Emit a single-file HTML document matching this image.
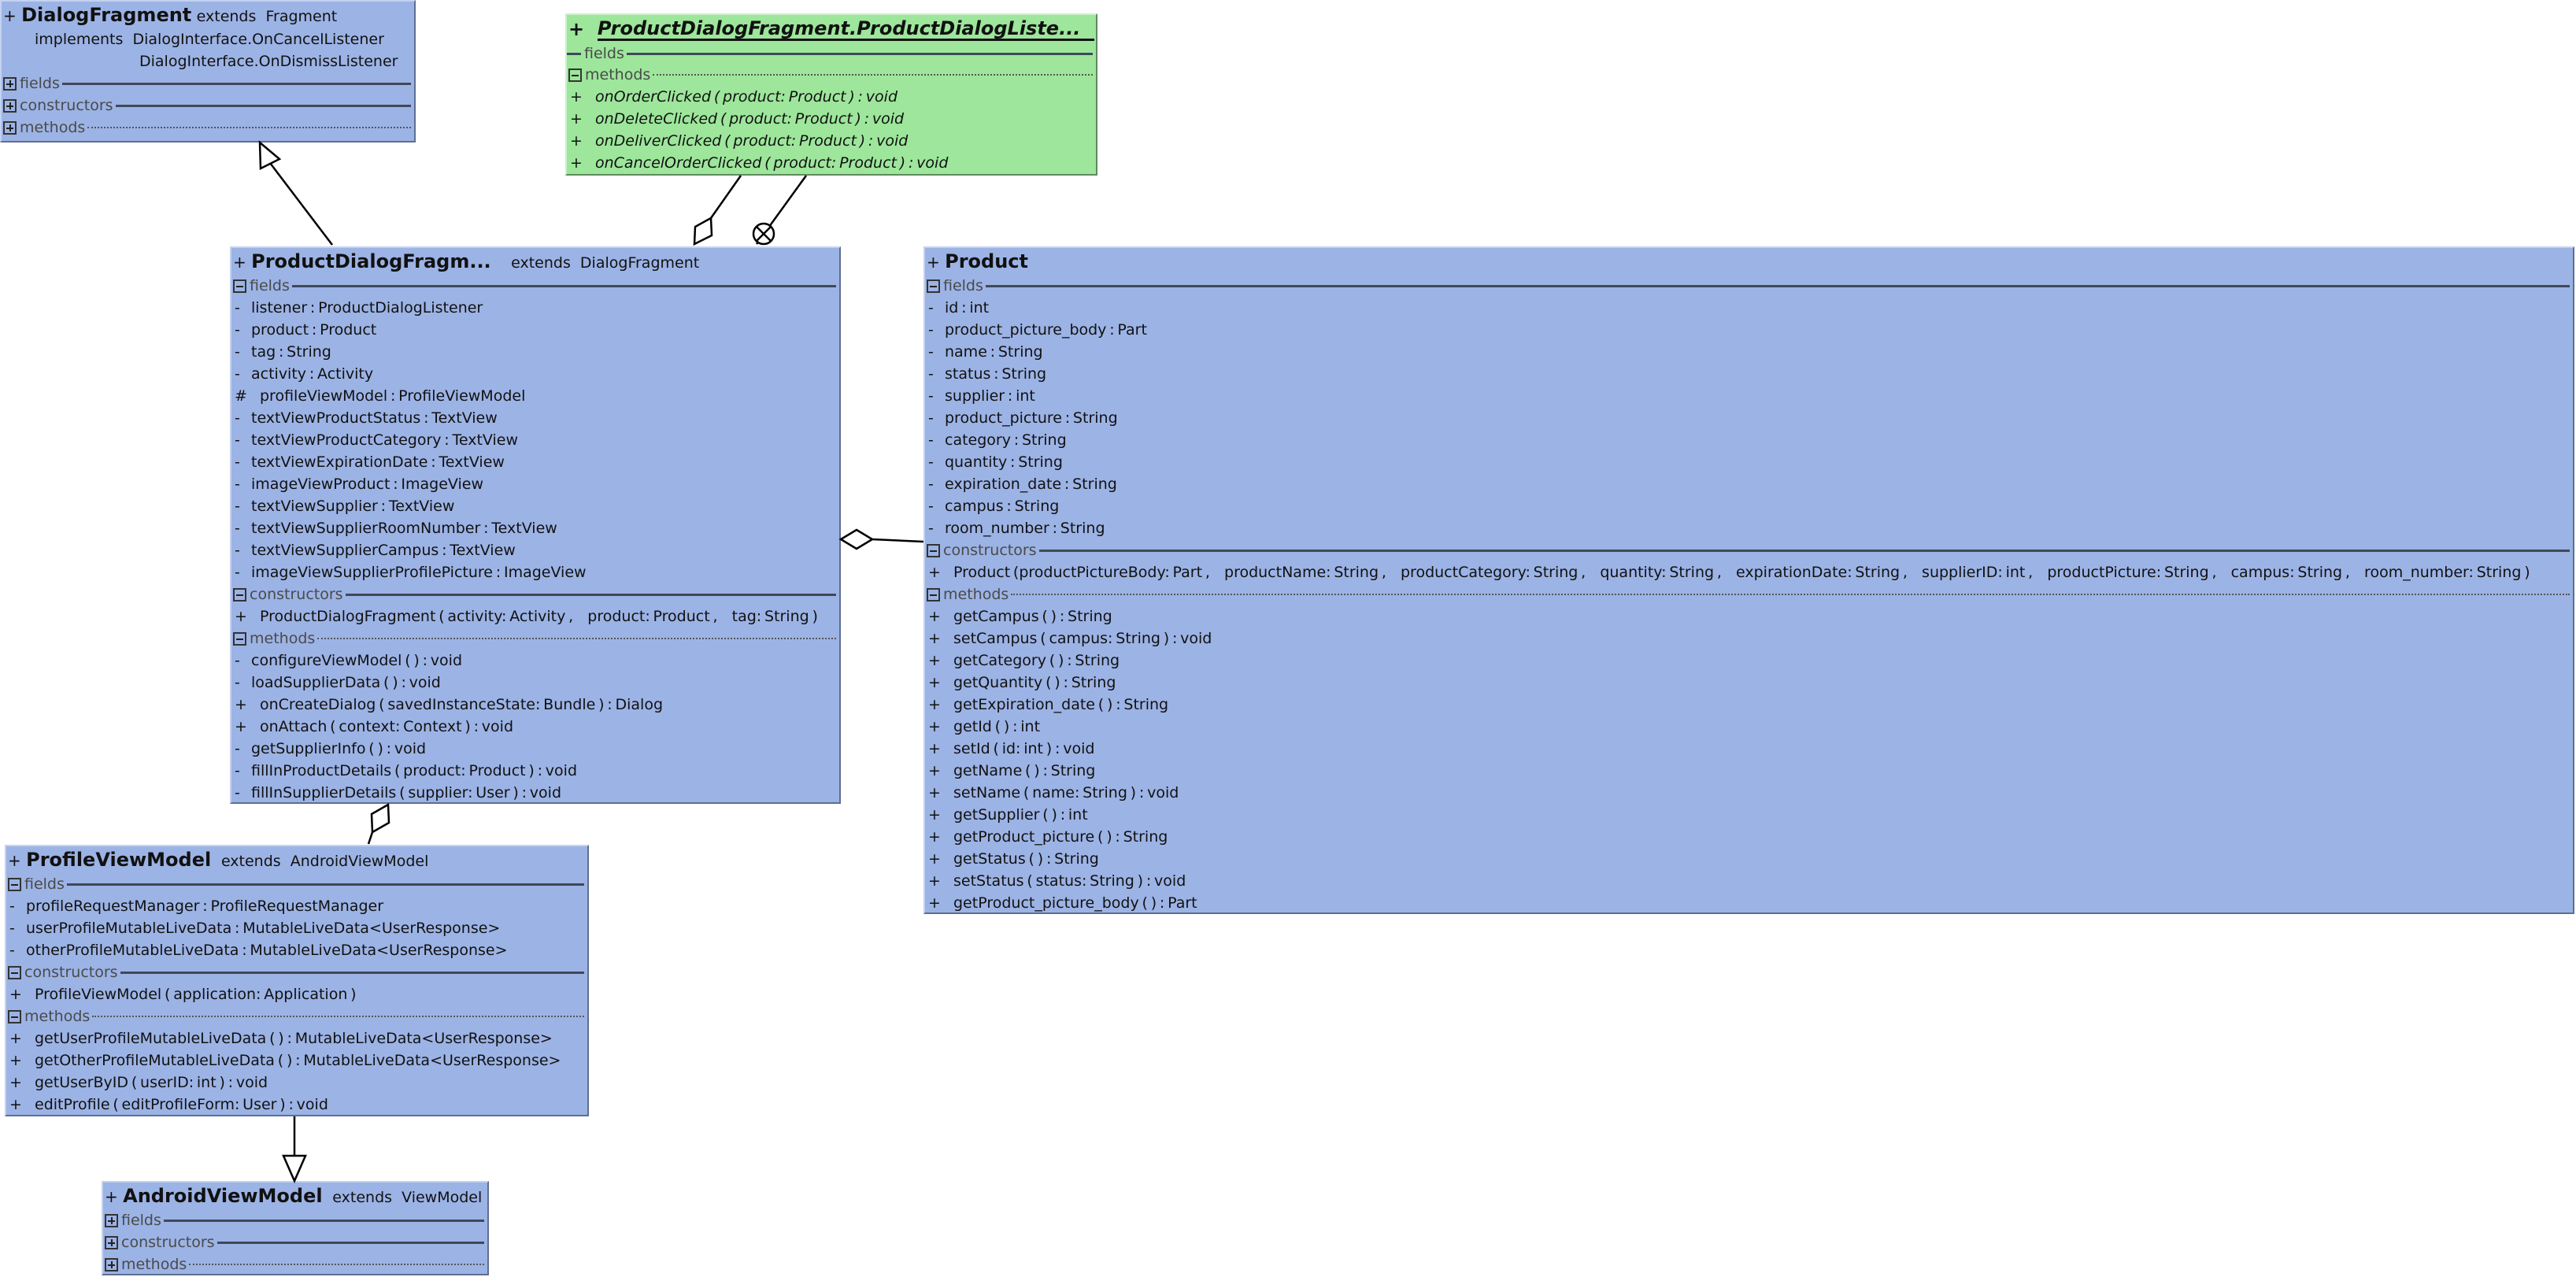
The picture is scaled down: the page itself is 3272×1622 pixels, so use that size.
<!DOCTYPE html>
<html><head><meta charset="utf-8">
<style>
html,body{margin:0;padding:0;background:#fff;}
body{width:3272px;height:1622px;position:relative;overflow:hidden;font-family:"DejaVu Sans","Liberation Sans",sans-serif;font-size:19px;color:#111;}
.box{position:absolute;box-sizing:border-box;background:#9cb3e5;border:2px solid;border-color:#c4d2f0 #5e6e90 #5e6e90 #c4d2f0;overflow:hidden;}
.green{background:#9de69b;border-color:#c8f2c6 #5e8a5e #5e8a5e #c8f2c6;}
.t{height:34px;line-height:34px;white-space:nowrap;padding-left:2px;font-size:20px;}
.t b{font-size:24px;}
.t span.e{font-size:19px;}
.r{height:28px;line-height:28px;white-space:nowrap;position:relative;}
.v{position:absolute;left:4px;}
.n{position:absolute;left:25px;}
.p{position:absolute;left:36px;}
.s{height:28px;display:flex;align-items:center;white-space:nowrap;padding-right:4px;}
.ic{width:13px;height:13px;border:2px solid #333;margin-left:2px;margin-right:4px;position:relative;flex:none;box-sizing:content-box;}
.ic:before{content:"";position:absolute;left:2px;right:2px;top:6px;height:2px;background:#222;}
.ic.plus:after{content:"";position:absolute;top:2px;bottom:2px;left:6px;width:2px;background:#222;}
.lb{color:#4a4a4a;margin-right:3px;}
.ln{flex:1;height:0;border-top:3px solid #404858;}
.dt{flex:1;height:0;border-top:2px dotted #555;}
i{font-style:italic;}
svg{position:absolute;left:0;top:0;}
</style></head><body>

<div class="box" style="left:0;top:0;width:528px;height:181px;">
 <div class="t">+ <b>DialogFragment</b> <span class="e">extends&nbsp; Fragment</span></div>
 <div class="r"><span style="position:absolute;left:42px">implements&nbsp; DialogInterface.OnCancelListener</span></div>
 <div class="r"><span style="position:absolute;left:175px">DialogInterface.OnDismissListener</span></div>
 <div class="s"><span class="ic plus"></span><span class="lb">fields</span><span class="ln"></span></div>
 <div class="s"><span class="ic plus"></span><span class="lb">constructors</span><span class="ln"></span></div>
 <div class="s"><span class="ic plus"></span><span class="lb">methods</span><span class="dt"></span></div>
</div>

<div class="box green" style="left:718px;top:17px;width:676px;height:206px;">
 <div class="t" style="height:36px;line-height:36px;display:flex;"><i><b>+&nbsp;&nbsp;</b></i><span style="flex:1;border-bottom:3px solid #111;height:30px;line-height:34px;margin-right:2px;"><i><b>ProductDialogFragment.ProductDialogListe...</b></i></span></div>
 <div class="s" style="height:26px"><span style="width:18px;border-top:3px solid #404858;margin-right:4px;"></span><span class="lb">fields</span><span class="ln"></span></div>
 <div class="s"><span class="ic"></span><span class="lb">methods</span><span class="dt"></span></div>
 <div class="r"><span class="v">+</span><span class="p"><i>onOrderClicked&#8201;(&#8201;product:&#8201;Product&#8201;)&#8201;:&#8201;void</i></span></div>
 <div class="r"><span class="v">+</span><span class="p"><i>onDeleteClicked&#8201;(&#8201;product:&#8201;Product&#8201;)&#8201;:&#8201;void</i></span></div>
 <div class="r"><span class="v">+</span><span class="p"><i>onDeliverClicked&#8201;(&#8201;product:&#8201;Product&#8201;)&#8201;:&#8201;void</i></span></div>
 <div class="r"><span class="v">+</span><span class="p"><i>onCancelOrderClicked&#8201;(&#8201;product:&#8201;Product&#8201;)&#8201;:&#8201;void</i></span></div>
</div>

<div class="box" style="left:292px;top:313px;width:776px;height:708px;">
 <div class="t">+ <b>ProductDialogFragm...</b>&nbsp;&nbsp;&nbsp; <span class="e">extends&nbsp; DialogFragment</span></div>
 <div class="s"><span class="ic"></span><span class="lb">fields</span><span class="ln"></span></div>
 <div class="r"><span class="v">-</span><span class="n">listener&#8201;:&#8201;ProductDialogListener</span></div>
 <div class="r"><span class="v">-</span><span class="n">product&#8201;:&#8201;Product</span></div>
 <div class="r"><span class="v">-</span><span class="n">tag&#8201;:&#8201;String</span></div>
 <div class="r"><span class="v">-</span><span class="n">activity&#8201;:&#8201;Activity</span></div>
 <div class="r"><span class="v">#</span><span class="p">profileViewModel&#8201;:&#8201;ProfileViewModel</span></div>
 <div class="r"><span class="v">-</span><span class="n">textViewProductStatus&#8201;:&#8201;TextView</span></div>
 <div class="r"><span class="v">-</span><span class="n">textViewProductCategory&#8201;:&#8201;TextView</span></div>
 <div class="r"><span class="v">-</span><span class="n">textViewExpirationDate&#8201;:&#8201;TextView</span></div>
 <div class="r"><span class="v">-</span><span class="n">imageViewProduct&#8201;:&#8201;ImageView</span></div>
 <div class="r"><span class="v">-</span><span class="n">textViewSupplier&#8201;:&#8201;TextView</span></div>
 <div class="r"><span class="v">-</span><span class="n">textViewSupplierRoomNumber&#8201;:&#8201;TextView</span></div>
 <div class="r"><span class="v">-</span><span class="n">textViewSupplierCampus&#8201;:&#8201;TextView</span></div>
 <div class="r"><span class="v">-</span><span class="n">imageViewSupplierProfilePicture&#8201;:&#8201;ImageView</span></div>
 <div class="s"><span class="ic"></span><span class="lb">constructors</span><span class="ln"></span></div>
 <div class="r"><span class="v">+</span><span class="p">ProductDialogFragment&#8201;(&#8201;activity:&#8201;Activity&#8201;,&nbsp;&nbsp; product:&#8201;Product&#8201;,&nbsp;&nbsp; tag:&#8201;String&#8201;)</span></div>
 <div class="s"><span class="ic"></span><span class="lb">methods</span><span class="dt"></span></div>
 <div class="r"><span class="v">-</span><span class="n">configureViewModel&#8201;(&#8201;)&#8201;:&#8201;void</span></div>
 <div class="r"><span class="v">-</span><span class="n">loadSupplierData&#8201;(&#8201;)&#8201;:&#8201;void</span></div>
 <div class="r"><span class="v">+</span><span class="p">onCreateDialog&#8201;(&#8201;savedInstanceState:&#8201;Bundle&#8201;)&#8201;:&#8201;Dialog</span></div>
 <div class="r"><span class="v">+</span><span class="p">onAttach&#8201;(&#8201;context:&#8201;Context&#8201;)&#8201;:&#8201;void</span></div>
 <div class="r"><span class="v">-</span><span class="n">getSupplierInfo&#8201;(&#8201;)&#8201;:&#8201;void</span></div>
 <div class="r"><span class="v">-</span><span class="n">fillInProductDetails&#8201;(&#8201;product:&#8201;Product&#8201;)&#8201;:&#8201;void</span></div>
 <div class="r"><span class="v">-</span><span class="n">fillInSupplierDetails&#8201;(&#8201;supplier:&#8201;User&#8201;)&#8201;:&#8201;void</span></div>
</div>

<div class="box" style="left:1173px;top:313px;width:2097px;height:848px;">
 <div class="t">+ <b>Product</b></div>
 <div class="s"><span class="ic"></span><span class="lb">fields</span><span class="ln"></span></div>
 <div class="r"><span class="v">-</span><span class="n">id&#8201;:&#8201;int</span></div>
 <div class="r"><span class="v">-</span><span class="n">product_picture_body&#8201;:&#8201;Part</span></div>
 <div class="r"><span class="v">-</span><span class="n">name&#8201;:&#8201;String</span></div>
 <div class="r"><span class="v">-</span><span class="n">status&#8201;:&#8201;String</span></div>
 <div class="r"><span class="v">-</span><span class="n">supplier&#8201;:&#8201;int</span></div>
 <div class="r"><span class="v">-</span><span class="n">product_picture&#8201;:&#8201;String</span></div>
 <div class="r"><span class="v">-</span><span class="n">category&#8201;:&#8201;String</span></div>
 <div class="r"><span class="v">-</span><span class="n">quantity&#8201;:&#8201;String</span></div>
 <div class="r"><span class="v">-</span><span class="n">expiration_date&#8201;:&#8201;String</span></div>
 <div class="r"><span class="v">-</span><span class="n">campus&#8201;:&#8201;String</span></div>
 <div class="r"><span class="v">-</span><span class="n">room_number&#8201;:&#8201;String</span></div>
 <div class="s"><span class="ic"></span><span class="lb">constructors</span><span class="ln"></span></div>
 <div class="r"><span class="v">+</span><span class="p">Product&#8201;(productPictureBody:&#8201;Part&#8201;,&nbsp;&nbsp; productName:&#8201;String&#8201;,&nbsp;&nbsp; productCategory:&#8201;String&#8201;,&nbsp;&nbsp; quantity:&#8201;String&#8201;,&nbsp;&nbsp; expirationDate:&#8201;String&#8201;,&nbsp;&nbsp; supplierID:&#8201;int&#8201;,&nbsp;&nbsp; productPicture:&#8201;String&#8201;,&nbsp;&nbsp; campus:&#8201;String&#8201;,&nbsp;&nbsp; room_number:&#8201;String&#8201;)</span></div>
 <div class="s"><span class="ic"></span><span class="lb">methods</span><span class="dt"></span></div>
 <div class="r"><span class="v">+</span><span class="p">getCampus&#8201;(&#8201;)&#8201;:&#8201;String</span></div>
 <div class="r"><span class="v">+</span><span class="p">setCampus&#8201;(&#8201;campus:&#8201;String&#8201;)&#8201;:&#8201;void</span></div>
 <div class="r"><span class="v">+</span><span class="p">getCategory&#8201;(&#8201;)&#8201;:&#8201;String</span></div>
 <div class="r"><span class="v">+</span><span class="p">getQuantity&#8201;(&#8201;)&#8201;:&#8201;String</span></div>
 <div class="r"><span class="v">+</span><span class="p">getExpiration_date&#8201;(&#8201;)&#8201;:&#8201;String</span></div>
 <div class="r"><span class="v">+</span><span class="p">getId&#8201;(&#8201;)&#8201;:&#8201;int</span></div>
 <div class="r"><span class="v">+</span><span class="p">setId&#8201;(&#8201;id:&#8201;int&#8201;)&#8201;:&#8201;void</span></div>
 <div class="r"><span class="v">+</span><span class="p">getName&#8201;(&#8201;)&#8201;:&#8201;String</span></div>
 <div class="r"><span class="v">+</span><span class="p">setName&#8201;(&#8201;name:&#8201;String&#8201;)&#8201;:&#8201;void</span></div>
 <div class="r"><span class="v">+</span><span class="p">getSupplier&#8201;(&#8201;)&#8201;:&#8201;int</span></div>
 <div class="r"><span class="v">+</span><span class="p">getProduct_picture&#8201;(&#8201;)&#8201;:&#8201;String</span></div>
 <div class="r"><span class="v">+</span><span class="p">getStatus&#8201;(&#8201;)&#8201;:&#8201;String</span></div>
 <div class="r"><span class="v">+</span><span class="p">setStatus&#8201;(&#8201;status:&#8201;String&#8201;)&#8201;:&#8201;void</span></div>
 <div class="r"><span class="v">+</span><span class="p">getProduct_picture_body&#8201;(&#8201;)&#8201;:&#8201;Part</span></div>
</div>

<div class="box" style="left:6px;top:1073px;width:742px;height:345px;">
 <div class="t">+ <b>ProfileViewModel</b>&nbsp; <span class="e">extends&nbsp; AndroidViewModel</span></div>
 <div class="s"><span class="ic"></span><span class="lb">fields</span><span class="ln"></span></div>
 <div class="r"><span class="v">-</span><span class="n">profileRequestManager&#8201;:&#8201;ProfileRequestManager</span></div>
 <div class="r"><span class="v">-</span><span class="n">userProfileMutableLiveData&#8201;:&#8201;MutableLiveData&lt;UserResponse&gt;</span></div>
 <div class="r"><span class="v">-</span><span class="n">otherProfileMutableLiveData&#8201;:&#8201;MutableLiveData&lt;UserResponse&gt;</span></div>
 <div class="s"><span class="ic"></span><span class="lb">constructors</span><span class="ln"></span></div>
 <div class="r"><span class="v">+</span><span class="p">ProfileViewModel&#8201;(&#8201;application:&#8201;Application&#8201;)</span></div>
 <div class="s"><span class="ic"></span><span class="lb">methods</span><span class="dt"></span></div>
 <div class="r"><span class="v">+</span><span class="p">getUserProfileMutableLiveData&#8201;(&#8201;)&#8201;:&#8201;MutableLiveData&lt;UserResponse&gt;</span></div>
 <div class="r"><span class="v">+</span><span class="p">getOtherProfileMutableLiveData&#8201;(&#8201;)&#8201;:&#8201;MutableLiveData&lt;UserResponse&gt;</span></div>
 <div class="r"><span class="v">+</span><span class="p">getUserByID&#8201;(&#8201;userID:&#8201;int&#8201;)&#8201;:&#8201;void</span></div>
 <div class="r"><span class="v">+</span><span class="p">editProfile&#8201;(&#8201;editProfileForm:&#8201;User&#8201;)&#8201;:&#8201;void</span></div>
</div>

<div class="box" style="left:129px;top:1500px;width:492px;height:120px;">
 <div class="t">+ <b>AndroidViewModel</b>&nbsp; <span class="e">extends&nbsp; ViewModel</span></div>
 <div class="s"><span class="ic plus"></span><span class="lb">fields</span><span class="ln"></span></div>
 <div class="s"><span class="ic plus"></span><span class="lb">constructors</span><span class="ln"></span></div>
 <div class="s"><span class="ic plus"></span><span class="lb">methods</span><span class="dt"></span></div>
</div>

<svg width="3272" height="1622" viewBox="0 0 3272 1622" fill="none" stroke="#000" stroke-width="2.5">
 <line x1="422" y1="311" x2="343" y2="207"/>
 <polygon points="330,181 355,202 331,214" fill="#fff"/>
 <line x1="941" y1="223" x2="903" y2="277"/>
 <polygon points="903,277 883,288 882,310 904,299" fill="#fff"/>
 <line x1="1024" y1="223" x2="961" y2="310"/>
 <circle cx="970" cy="297" r="13" fill="#fff"/>
 <line x1="961" y1="288" x2="979" y2="306"/>
 <line x1="979" y1="288" x2="961" y2="306"/>
 <line x1="1108" y1="685" x2="1173" y2="688"/>
 <polygon points="1068,685 1088,673 1108,685 1088,697" fill="#fff"/>
 <polygon points="493,1022 494,1045 473,1057 472,1034" fill="#fff"/>
 <line x1="473" y1="1057" x2="468" y2="1072"/>
 <line x1="374" y1="1418" x2="374" y2="1468"/>
 <polygon points="374,1500 360,1468 388,1468" fill="#fff"/>
</svg>
</body></html>
